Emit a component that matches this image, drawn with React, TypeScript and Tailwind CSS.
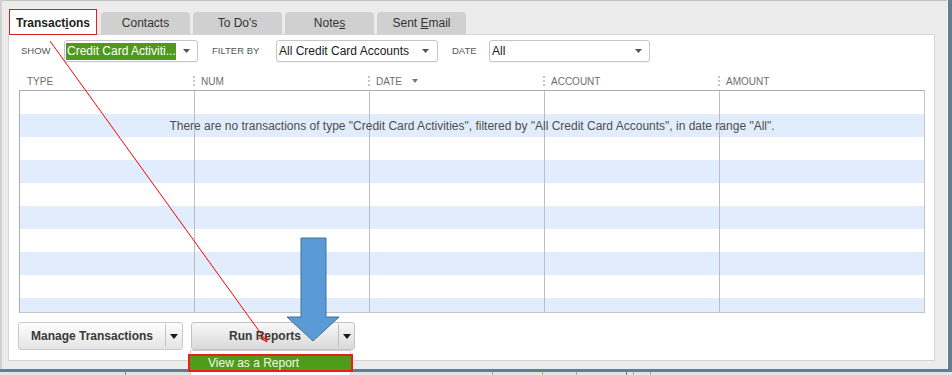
import React from "react";

const Tri = ({ className = "", w = 7, h = 4 }: { className?: string; w?: number; h?: number }) => (
  <svg width={w} height={h} viewBox={`0 0 ${w} ${h}`} className={"shrink-0 " + className}>
    <path d={`M0 0H${w}L${w / 2} ${h}Z`} fill="currentColor" />
  </svg>
);

const Dots = () => (
  <svg width="2" height="10" viewBox="0 0 2 10" className="shrink-0">
    <rect x="0.5" y="0" width="1" height="2" fill="#8c8c8c" />
    <rect x="0.5" y="4" width="1" height="2" fill="#8c8c8c" />
    <rect x="0.5" y="8" width="1" height="2" fill="#8c8c8c" />
  </svg>
);

const Tab = ({ children }: { children: React.ReactNode }) => (
  <div className="w-[89px] h-[22px] rounded-t-[4px] bg-[#d0d0d0] flex items-center justify-center text-[12px] text-[#333]">
    {children}
  </div>
);

const Row = ({ blue, children }: { blue?: boolean; children?: React.ReactNode }) => (
  <div className={"relative h-[23px] shrink-0 grid grid-cols-[175px_175px_175px_175px_1fr] " + (blue ? "bg-[#e1edfd]" : "bg-white")}>
    <div className="border-r border-[#bdbdbd]" />
    <div className="border-r border-[#bdbdbd]" />
    <div className="border-r border-[#bdbdbd]" />
    <div className="border-r border-[#bdbdbd]" />
    <div />
    {children}
  </div>
);

export default function App() {
  const rows = Array.from({ length: 10 }, (_, i) => i);
  return (
    <div className="relative w-[952px] h-[375px] overflow-hidden bg-[#ececec] flex flex-col font-['Liberation_Sans',Arial,sans-serif]">
      <div className="flex h-[369px] shrink-0">
        <div className="w-[2px] bg-[#d2d2d2]" />
        <div className="flex-1 flex flex-col">
          <div className="h-[1px] bg-[#c2c2c2]" />
          {/* tabs */}
          <div className="h-[33px] flex items-end pl-[7px] gap-[3px]">
            <div className="relative z-10 w-[88px] h-[26px] mb-[-1px] mr-[1px] bg-white border border-[#e02020] flex items-center justify-center pt-[2px] text-[12px] font-bold text-[#222]">
              <span>
                Transact<span className="underline">i</span>ons
              </span>
            </div>
            <Tab>Contacts</Tab>
            <Tab>To Do's</Tab>
            <Tab>
              <span>
                Note<span className="underline">s</span>
              </span>
            </Tab>
            <Tab>
              <span>
                Sent <span className="underline">E</span>mail
              </span>
            </Tab>
          </div>
          {/* panel */}
          <div className="ml-[6px] w-[927px] h-[327px] border border-[#d4d4d4] bg-white flex flex-col">
            {/* filter row */}
            <div className="flex items-center pl-[12px] pt-[5px] h-[27px]">
              <span className="w-[43px] text-[9.5px] text-[#555]">SHOW</span>
              <div className="w-[134px] h-[22px] border border-[#c6c6c6] rounded-[3px] bg-white flex items-center pl-[1px] pr-[7px] shadow-[0_1px_1px_rgba(0,0,0,0.06)]">
                <div className="w-[110px] h-[17px] bg-[#4e9a1c] text-white text-[12px] leading-[17px] pl-[1px] whitespace-nowrap overflow-hidden">
                  Credit Card Activiti...
                </div>
                <Tri className="ml-auto text-[#555]" />
              </div>
              <span className="ml-[14px] w-[64px] text-[9.5px] text-[#555]">FILTER BY</span>
              <div className="w-[162px] h-[22px] border border-[#c6c6c6] rounded-[3px] bg-white flex items-center pl-[2px] pr-[8px] shadow-[0_1px_1px_rgba(0,0,0,0.06)]">
                <span className="text-[12px] text-[#1a1a1a] whitespace-nowrap">All Credit Card Accounts</span>
                <Tri className="ml-auto text-[#555]" />
              </div>
              <span className="ml-[14px] w-[37px] text-[9.5px] text-[#555]">DATE</span>
              <div className="w-[161px] h-[22px] border border-[#c6c6c6] rounded-[3px] bg-white flex items-center pl-[2px] pr-[7px] shadow-[0_1px_1px_rgba(0,0,0,0.06)]">
                <span className="text-[12px] text-[#1a1a1a]">All</span>
                <Tri className="ml-auto text-[#555]" />
              </div>
            </div>
            {/* header row */}
            <div className="mt-[10px] h-[18px] ml-[9px] w-[907px] grid grid-cols-[175px_175px_175px_175px_1fr] text-[10px] text-[#6e6e6e]">
              <div className="flex items-center pl-[9px]">TYPE</div>
              <div className="flex items-center">
                <Dots />
                <span className="ml-[6px]">NUM</span>
              </div>
              <div className="flex items-center">
                <Dots />
                <span className="ml-[6px]">DATE</span>
                <Tri w={6} h={4} className="ml-[10px] text-[#777]" />
              </div>
              <div className="flex items-center">
                <Dots />
                <span className="ml-[6px]">ACCOUNT</span>
              </div>
              <div className="flex items-center">
                <Dots />
                <span className="ml-[6px]">AMOUNT</span>
              </div>
            </div>
            {/* table */}
            <div className="ml-[10px] w-[906px] h-[223px] border border-[#acacac] border-b-[#c4c4c4] border-r-[#c4c4c4] flex flex-col overflow-hidden">
              {rows.map((i) => (
                <Row key={i} blue={i % 2 === 1}>
                  {i === 1 && (
                    <div className="absolute inset-0 flex items-center justify-center text-[12px] text-[#4d4d4d] whitespace-nowrap">
                      There are no transactions of type "Credit Card Activities", filtered by "All Credit Card Accounts", in date range "All".
                    </div>
                  )}
                </Row>
              ))}
            </div>
            {/* buttons */}
            <div className="flex mt-[9px] ml-[9px] gap-[8px]">
              <div className="w-[165px] h-[28px] flex rounded-[3px] border border-[#c8c8c8] bg-linear-to-b from-[#fefefe] to-[#e4e4e4]">
                <div className="w-[146px] flex items-center justify-center font-bold text-[12px] text-[#3a3a3a]">Manage Transactions</div>
                <div className="w-[1px] mt-[1px] mb-[2px] bg-[#c4c4c4]" />
                <div className="flex-1 flex items-center justify-center text-[#1a1a1a]">
                  <Tri w={8} h={5} />
                </div>
              </div>
              <div className="relative w-[164px] h-[28px] flex rounded-[3px] border border-[#c3c3c3] bg-linear-to-b from-[#f8f8f8] to-[#d9d9d9]">
                <div className="w-[146px] flex items-center justify-center font-bold text-[12px] text-[#3a3a3a]">Run Reports</div>
                <div className="w-[1px] mt-[1px] mb-[2px] bg-[#c0c0c0]" />
                <div className="flex-1 flex items-center justify-center text-[#1a1a1a]">
                  <Tri w={8} h={5} />
                </div>
                {/* menu */}
                <div className="absolute left-[-2px] top-[27px] w-[161px] h-[30px] bg-white border border-[#d0d0d0] pt-[3px] z-20">
                  <div className="relative h-[18px] mx-[-3px] border-2 border-[#ee1c1c]">
                    <div className="h-full bg-[#4f9c1b] text-[#f4f8e8] text-[12px] leading-[14px] pl-[18px]">View as a Report</div>
                  </div>
                </div>
              </div>
            </div>
          </div>
        </div>
        <div className="w-[1px] bg-[#f4f4f4]" />
        <div className="w-[4px] bg-[#627d94]" />
      </div>
      <div className="h-[3px] bg-[#627d94]" />
      <div className="h-[3px] bg-[#e4e4e4] flex">
        <div className="ml-[125px] w-[1px] bg-[#888]" />
        <div className="ml-[366px] w-[1px] bg-[#aaa]" />
        <div className="ml-[49px] w-[1px] bg-[#e8a040]" />
        <div className="ml-[33px] w-[1px] bg-[#aaa]" />
        <div className="ml-[49px] w-[1px] bg-[#777]" />
        <div className="ml-[6px] w-[1px] bg-[#aaa]" />
        <div className="ml-[16px] w-[1px] bg-[#aaa]" />
      </div>
      {/* annotations */}
      <svg className="absolute inset-0 pointer-events-none z-30" width="952" height="375" viewBox="0 0 952 375">
        <line x1="50" y1="41" x2="267" y2="342" stroke="#ff0000" strokeWidth="1" />
        <line x1="267" y1="342" x2="265.3" y2="333.2" stroke="#ff0000" strokeWidth="1" />
        <line x1="267" y1="342" x2="259.1" y2="337.6" stroke="#ff0000" strokeWidth="1" />
        <polygon
          points="301,238 326,238 326,317 339,317 313,341 287,317 301,317"
          fill="#5b9bd5"
          stroke="#41719c"
          strokeWidth="1"
        />
      </svg>
    </div>
  );
}
